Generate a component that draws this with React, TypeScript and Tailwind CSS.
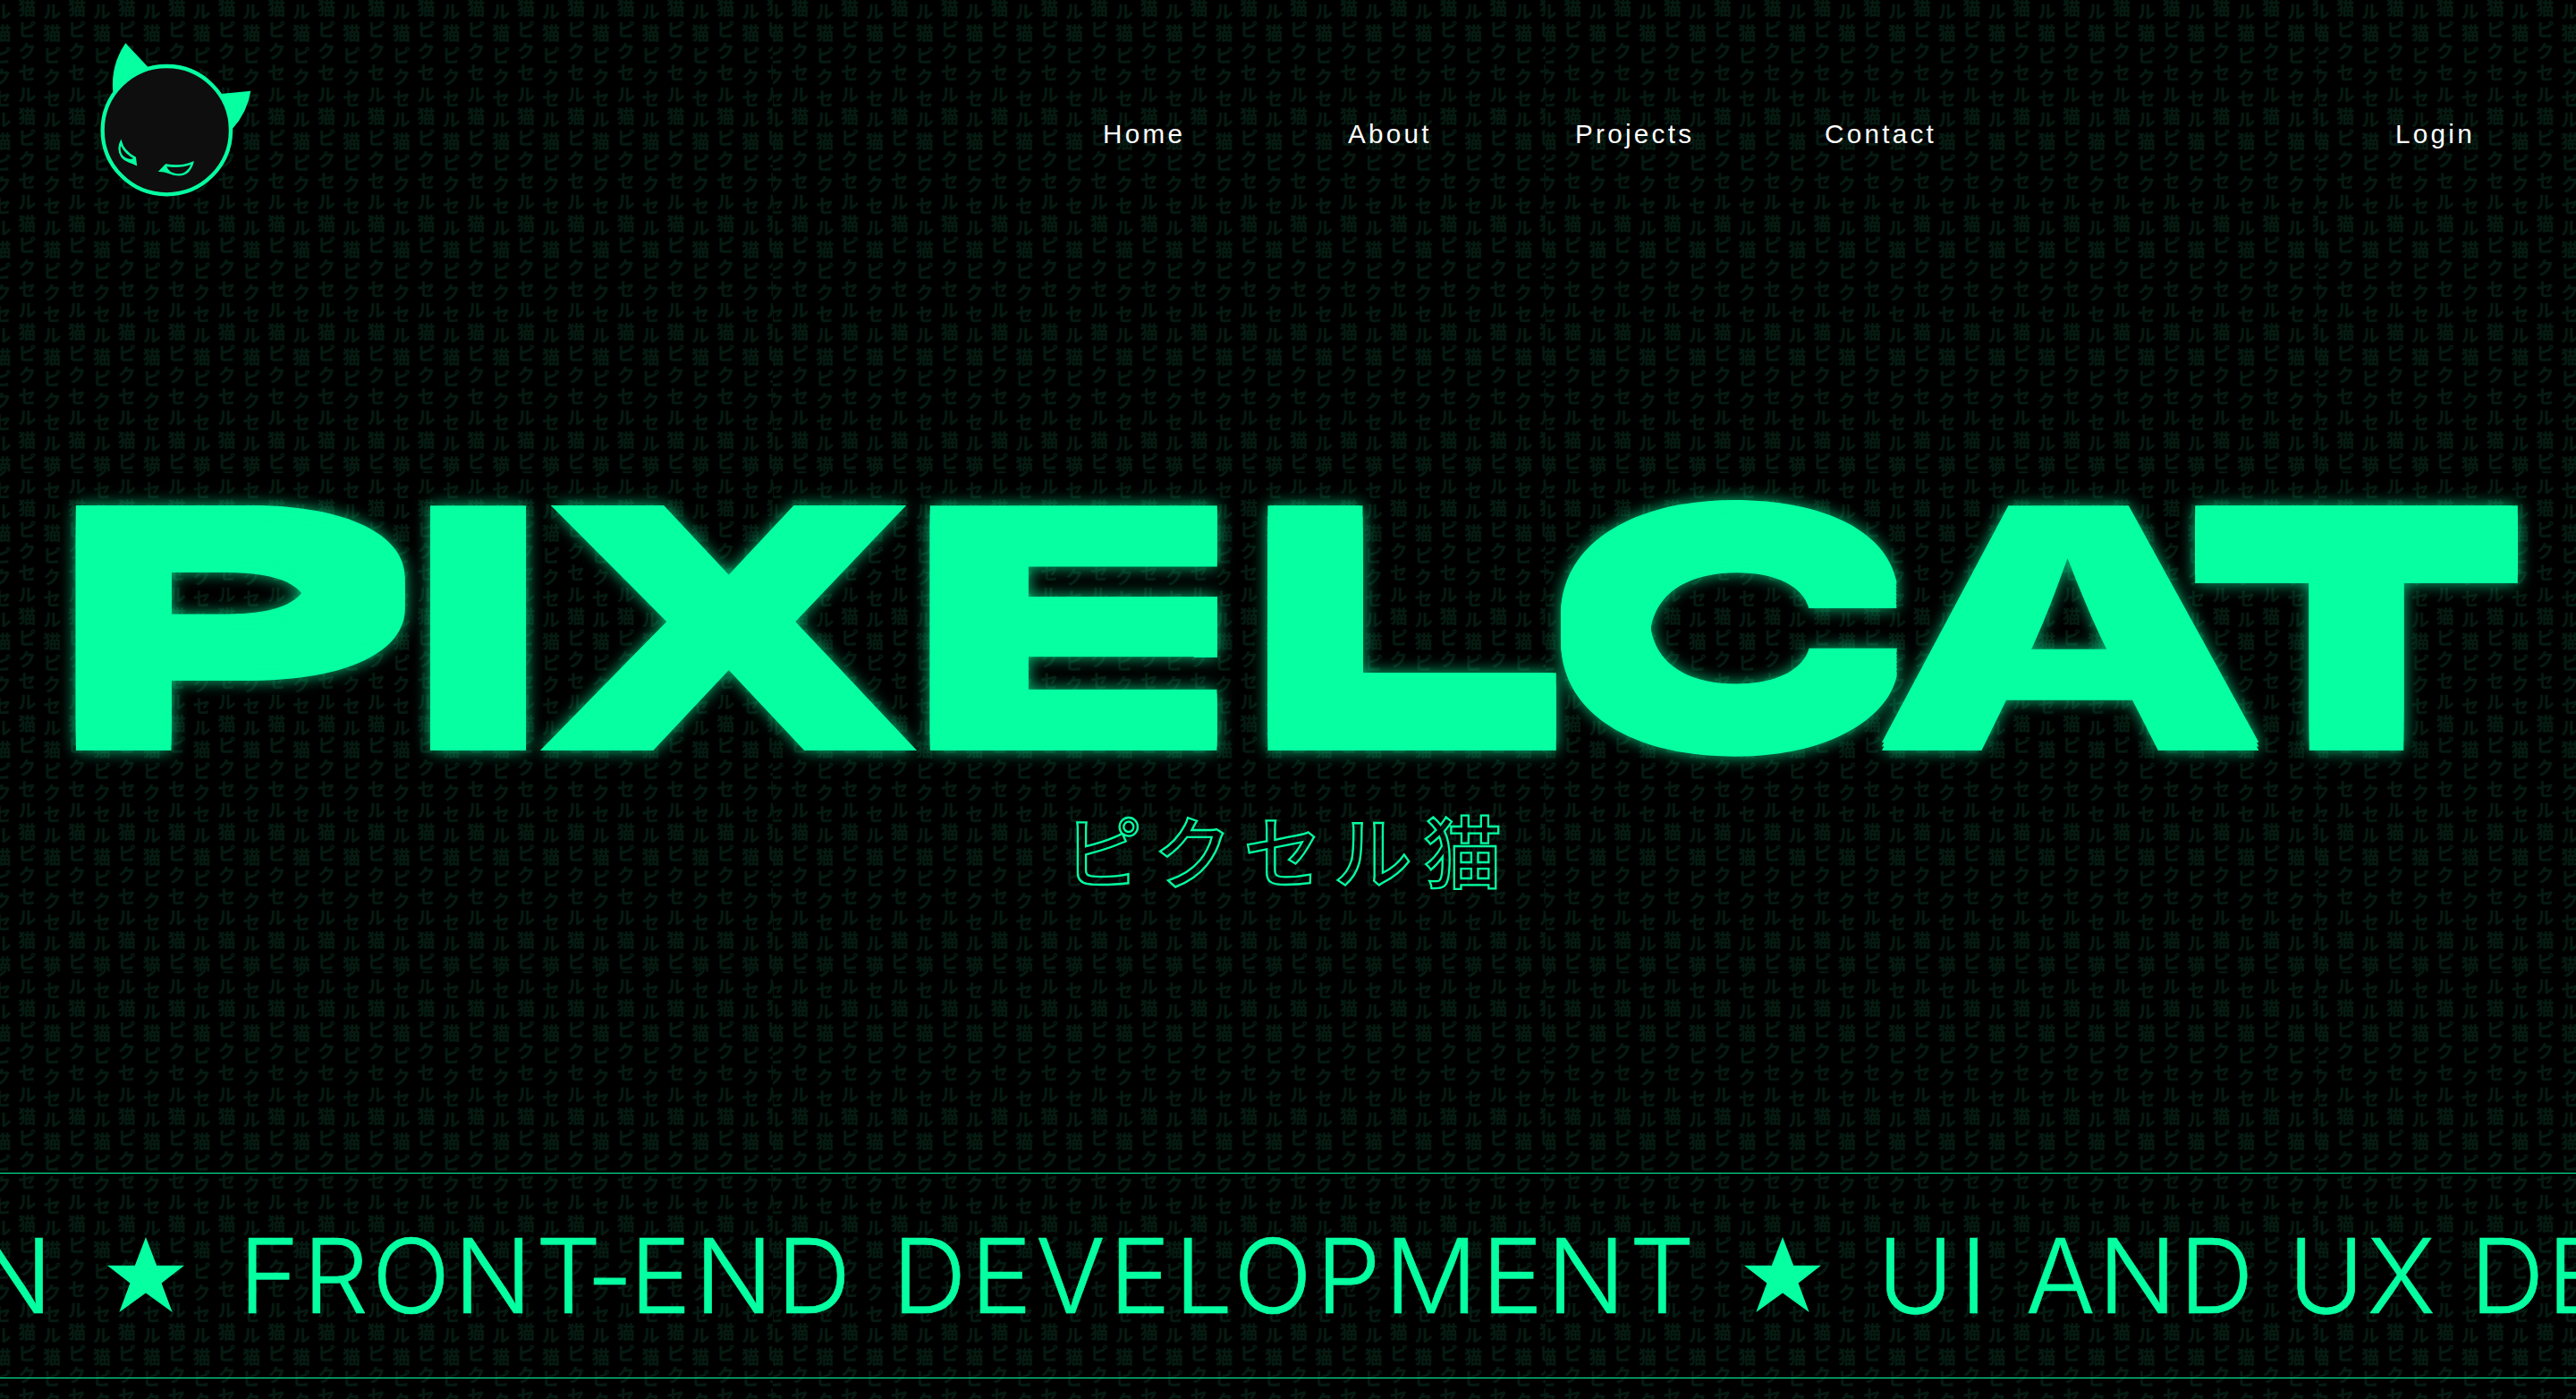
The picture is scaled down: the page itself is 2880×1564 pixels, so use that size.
import type { ReactNode } from "react";

const GREEN = "#05ffa1";

const EVEN_COLUMN = "セル猫ピクセル猫ピクセル猫ピクセル猫ピクセル猫ピ";
const ODD_COLUMN = "クセル猫ピクセル猫ピクセル猫ピクセル猫ピクセル猫";

/** One block of the kana wallpaper; columns alternate in phase. */
function PatternTile() {
  return (
    <div className="h-[559px] w-[864px] overflow-hidden">
      <div className="-ml-[7.6px] flex">
        {Array.from({ length: 32 }, (_, i) => (
          <div
            key={i}
            className={
              i % 2 === 0
                ? "-mt-[15px] w-[27.9px] shrink-0"
                : "-mt-[19.2px] w-[27.9px] shrink-0"
            }
          >
            <div className="w-[20px] break-all">{i % 2 === 0 ? ODD_COLUMN : EVEN_COLUMN}</div>
          </div>
        ))}
      </div>
    </div>
  );
}

function Backdrop() {
  return (
    <div
      aria-hidden
      className="pointer-events-none absolute inset-0 overflow-hidden font-['Noto_Sans_CJK_JP',sans-serif] text-[20px] leading-[24.13px] font-bold text-[#061b12] select-none [-webkit-text-stroke:0.4px_#061b12]"
    >
      <div className="-mt-[32px] grid w-[3456px] grid-cols-[repeat(4,864px)]">
        {Array.from({ length: 12 }, (_, i) => (
          <PatternTile key={i} />
        ))}
      </div>
    </div>
  );
}

function CatLogo() {
  return (
    <svg viewBox="0 0 660 630" className="h-[210px] w-[220px] shrink-0" fill={GREEN}>
      <path d="M151 55 L226 134 L200 190 L109 219 Q100 130 151 55 Z" />
      <path d="M471 225 L571 215 Q560 286 509 343 Z" />
      <circle cx="289" cy="347" r="215" fill="#0e0e0e" stroke={GREEN} strokeWidth="13" />
      <path
        d="M136 382 C141 406 158 424 184 438 L187 463 Q176 457 163 453 C142 446 130 432 129 408 Q129 394 136 382 Z"
        fill={GREEN}
        stroke={GREEN}
        strokeWidth="4"
        strokeLinejoin="miter"
      />
      <path d="M136 400 C143 415 156 429 177 441 Q175 444 165 443 C147 441 135 430 134 409 Z" fill="#0e0e0e" />
      <path
        d="M378 453 C350 465 320 468 286 462 L265 484 Q280 484 296 490 C325 502 346 500 361 486 Q375 470 378 453 Z"
        fill={GREEN}
        stroke={GREEN}
        strokeWidth="4"
      />
      <path d="M370 462 C350 470 320 473 289 469 Q292 478 302 486 C325 496 343 495 355 483 Q366 474 370 462 Z" fill="#0e0e0e" />
    </svg>
  );
}

function Header() {
  return (
    <header className="flex h-[240px] items-start pt-[30px] pl-[90px] font-['Liberation_Sans',sans-serif] text-[29.6px] leading-[36px] tracking-[3.3px] text-white">
      <CatLogo />
      <nav className="mt-[102px] ml-[923px] grid grid-cols-[274px_254px_279px_130px]">
        <a>Home</a>
        <a>About</a>
        <a>Projects</a>
        <a>Contact</a>
      </nav>
      <a className="mt-[102px] ml-[508px]">Login</a>
    </header>
  );
}

/** A letter stretched to fill its slot; the solid shadows thicken its strokes. */
function Letter({ slot, glyph, children }: { slot: string; glyph: string; children: ReactNode }) {
  return (
    <span className={`block shrink-0 ${slot}`}>
      <span className={`block w-max origin-left ${glyph}`}>{children}</span>
    </span>
  );
}

function Title() {
  return (
    <h1
      aria-label="PIXELCAT"
      className="-mt-px flex h-[301px] items-baseline pl-[85px] font-['Inter',sans-serif] leading-[300px] text-[#05ffa1] drop-shadow-[0_0_9px_rgba(5,255,161,0.75)]"
    >
      <Letter
        slot="w-[368px] mr-[28px]"
        glyph="text-[329px] font-bold scale-x-[2.011] translate-x-[-39.7px] translate-y-[-17.3px] [text-shadow:2px_0,-2px_0,2px_5px,-2px_5px,2px_-5px,-2px_-5px,2px_11px,-2px_11px,2px_-11px,-2px_-11px,2px_17.3px,-2px_17.3px,2px_-17.3px,-2px_-17.3px]"
      >
        P
      </Letter>
      <Letter slot="w-[107px] mr-[16px]" glyph="text-[376.4px] font-black scale-x-[1.443] translate-x-[-25.5px]">
        I
      </Letter>
      <Letter
        slot="w-[421px] mr-[15px] font-['Liberation_Sans',sans-serif]"
        glyph="text-[398.3px] font-bold scale-x-[1.489] translate-x-[12.7px] [text-shadow:4px_0,8px_0,12.1px_0,-4px_0,-8px_0,-12.1px_0]"
      >
        X
      </Letter>
      <Letter
        slot="relative w-[321px] mr-[56px] after:absolute after:top-[105.3px] after:right-0 after:h-[67.4px] after:w-[26px] after:bg-[#05ffa1]"
        glyph="text-[350.3px] font-extrabold scale-x-[1.815] translate-x-[-36.2px] translate-y-[-9.5px] [text-shadow:0_5px,0_9.5px,0_-5px,0_-9.5px]"
      >
        E
      </Letter>
      <Letter
        slot="w-[322px] mr-[6px]"
        glyph="text-[309.6px] font-bold scale-x-[2.225] translate-x-[-43.5px] translate-y-[-24.3px] [text-shadow:0.9px_0,-0.7px_0,0.9px_12px,-0.7px_12px,0.9px_24.3px,-0.7px_24.3px,0.9px_-12px,-0.7px_-12px,0.9px_-24.3px,-0.7px_-24.3px]"
      >
        L
      </Letter>
      <Letter
        slot="w-[376px] mr-[-17px]"
        glyph="text-[345px] font-extrabold scale-x-[1.636] translate-x-[-22.6px] translate-y-[-11.2px] [text-shadow:0_4px,0_8px,0_12px,0_14.5px,0_-4px,0_-8px,0_-12px,0_-14.5px]"
      >
        C
      </Letter>
      <Letter
        slot="w-[421px] mr-[-71px]"
        glyph="text-[364px] font-extrabold scale-x-[1.6] translate-x-[-13.4px] translate-y-[-4.5px] [text-shadow:0_4.5px,0_-4.5px]"
      >
        A
      </Letter>
      <Letter
        slot="w-[361px]"
        glyph="text-[318.6px] font-extrabold scale-x-[1.818] translate-x-[-15.5px] translate-y-[-21px] [text-shadow:1.65px_0,-1.65px_0,1.65px_11px,-1.65px_11px,1.65px_21px,-1.65px_21px,1.65px_-11px,-1.65px_-11px,1.65px_-21px,-1.65px_-21px]"
      >
        T
      </Letter>
    </h1>
  );
}

function Star({ className }: { className: string }) {
  return (
    <svg viewBox="0 0 86 84" className={`-mt-[2px] h-[84px] w-[86px] shrink-0 ${className}`} fill={GREEN}>
      <polygon points="43,0 55.2,31.7 86,31.7 60.6,51.5 72.7,84 43,62.5 13.3,84 25.4,51.5 0,31.7 30.8,31.7" />
    </svg>
  );
}

function Marquee() {
  return (
    <section className="flex h-[230px] items-center overflow-hidden border-y border-[#05ffa1] font-['Inter',sans-serif] text-[115.5px] leading-[226px] font-light tracking-[3.2px] whitespace-nowrap text-[#05ffa1] [-webkit-text-stroke:0.6px_#05ffa1]">
      <div className="flex w-[62px] shrink-0 justify-end">
        <span>DESIGN</span>
      </div>
      <Star className="ml-[58px]" />
      <span className="ml-[61px] w-[1628px] shrink-0">
        <span className="tracking-[3.8px]">FRONT</span>
        <span className="-mr-[7px] -ml-[20.5px]">-</span>
        <span className="tracking-[3.9px]">END </span>
        <span className="ml-[6px] tracking-[4.3px]">DEVELOPMENT</span>
      </span>
      <Star className="ml-[55px]" />
      <span className="ml-[63px] shrink-0 tracking-[3.1px]">
        <span className="tracking-[7.5px]">UI</span> AND UX DESIGN
      </span>
    </section>
  );
}

export default function App() {
  return (
    <div className="relative h-[1564px] w-[2880px] overflow-hidden bg-black">
      <Backdrop />
      <div className="relative flex h-full flex-col">
        <Header />
        <main className="flex h-[1071px] shrink-0 flex-col pt-[312px]">
          <Title />
          <p className="mt-[46px] ml-[1189px] font-['Noto_Sans_CJK_JP',sans-serif] text-[88px] leading-[100px] font-medium tracking-[12.6px] whitespace-nowrap text-transparent [-webkit-text-stroke:2.3px_#05ffa1]">
            ピクセル猫
          </p>
        </main>
        <Marquee />
      </div>
    </div>
  );
}
